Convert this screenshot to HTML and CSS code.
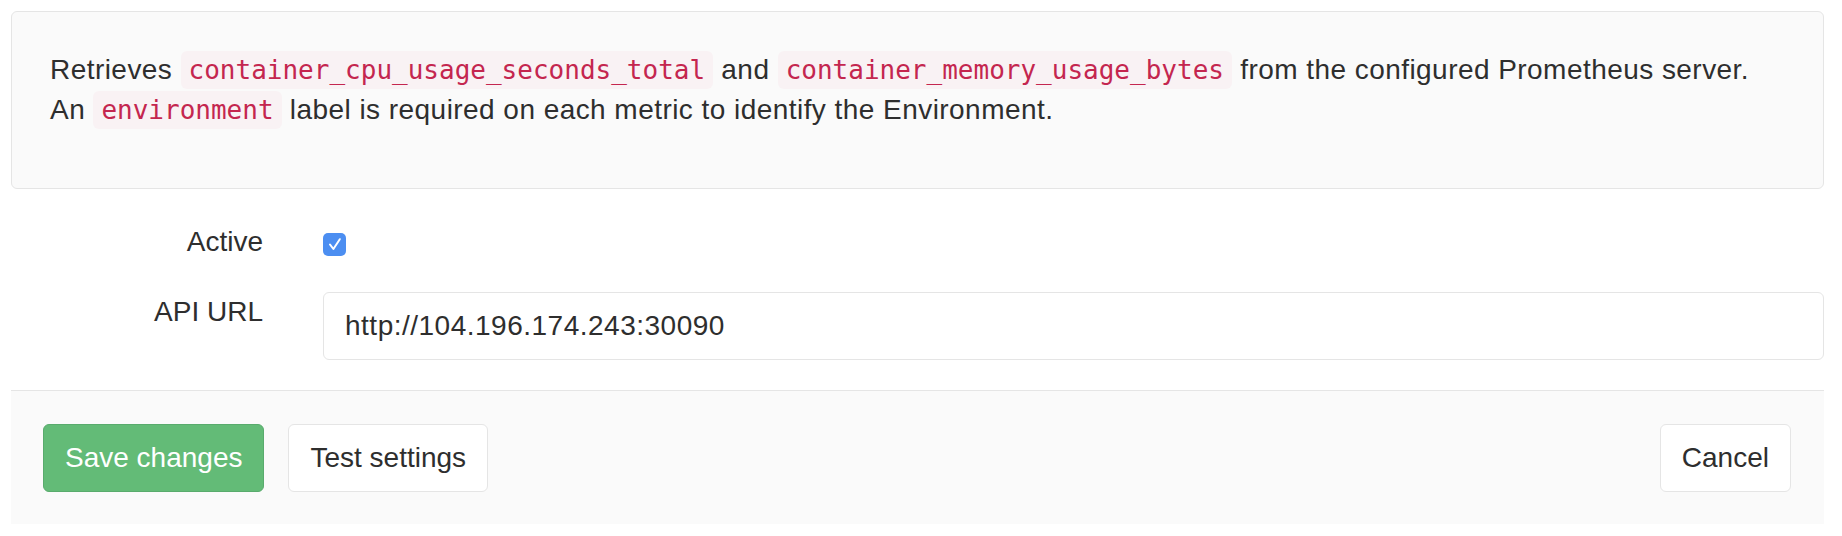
FILE: index.html
```html
<!DOCTYPE html>
<html lang="en">
<head>
<meta charset="utf-8">
<title>Prometheus integration</title>
<link rel="stylesheet" href="styles.css">
</head>
<body>
<div class="page">
  <div class="well">
    <p class="well-text">Retrieves <code>container_cpu_usage_seconds_total</code> and <code>container_memory_usage_bytes</code> from the configured Prometheus server.<br>An <code>environment</code> label is required on each metric to identify the Environment.</p>
  </div>
  <form class="form">
    <div class="form-group">
      <label class="control-label">Active</label>
      <div class="field field-check">
        <span class="checkbox">
          <svg width="23" height="23" viewBox="0 0 23 23" aria-hidden="true">
            <rect x="0" y="0" width="23" height="23" rx="5" fill="#4c8ef1"/>
            <path d="M7 11.5 L10.4 16 L16.8 6.2" fill="none" stroke="#ffffff" stroke-width="2" stroke-linecap="round" stroke-linejoin="round"/>
          </svg>
        </span>
      </div>
    </div>
    <div class="form-group">
      <label class="control-label">API URL</label>
      <div class="field">
        <input class="input" type="text" value="http://104.196.174.243:30090">
      </div>
    </div>
    <div class="footer">
      <div class="footer-left">
        <button type="button" class="btn btn-save">Save changes</button>
        <button type="button" class="btn">Test settings</button>
      </div>
      <button type="button" class="btn">Cancel</button>
    </div>
  </form>
</div>
</body>
</html>
```
FILE: styles.css
```css
* {
  box-sizing: border-box;
}

html, body {
  margin: 0;
  background: #ffffff;
}

body {
  font-family: "Liberation Sans", Arial, sans-serif;
  font-size: 28px;
  line-height: 40px;
  color: #2e2e2e;
}

.page {
  padding: 11px 18px 12px 11px;
}

.well {
  background: #fafafa;
  border: 1px solid #e5e5e5;
  border-radius: 6px;
  padding: 38px 38px 58px 38px;
  margin-bottom: 33px;
}

.well-text {
  margin: 0;
  letter-spacing: 0.45px;
}

code {
  font-family: "DejaVu Sans Mono", "Liberation Mono", monospace;
  font-size: 26px;
  letter-spacing: 0;
  color: #c4264f;
  background: #f9f2f4;
  padding: 4px 8px;
  border-radius: 6px;
}

.form {
  margin: 0;
}

.form-group {
  display: grid;
  grid-template-columns: 282px 1fr;
  margin-bottom: 30px;
}

.control-label {
  text-align: right;
  padding-right: 30px;
}

.field {
  padding-left: 30px;
}

.field-check {
  display: flex;
  align-items: center;
}

.checkbox {
  display: block;
  width: 23px;
  height: 23px;
  margin-top: 4px;
}

.checkbox svg {
  display: block;
}

.input {
  display: block;
  width: 100%;
  height: 68px;
  margin: 0;
  padding: 0 21px;
  border: 1px solid #e5e5e5;
  border-radius: 6px;
  background: #ffffff;
  font-family: "Liberation Sans", Arial, sans-serif;
  font-size: 28px;
  letter-spacing: 0.5px;
  color: #2e2e2e;
  outline: none;
}

.footer {
  display: flex;
  justify-content: space-between;
  align-items: center;
  background: #fafafa;
  border-top: 1px solid #e5e5e5;
  padding: 33px 33px 32px 32px;
}

.footer-left {
  display: flex;
  gap: 24px;
}

.btn {
  height: 68px;
  margin: 0;
  padding: 0 21px;
  border: 1px solid #e5e5e5;
  border-radius: 6px;
  background: #ffffff;
  font-family: "Liberation Sans", Arial, sans-serif;
  font-size: 28px;
  line-height: 40px;
  color: #2e2e2e;
  cursor: pointer;
}

.btn-save {
  background: #63bb77;
  border-color: #59ab6d;
  color: #ffffff;
}
```
